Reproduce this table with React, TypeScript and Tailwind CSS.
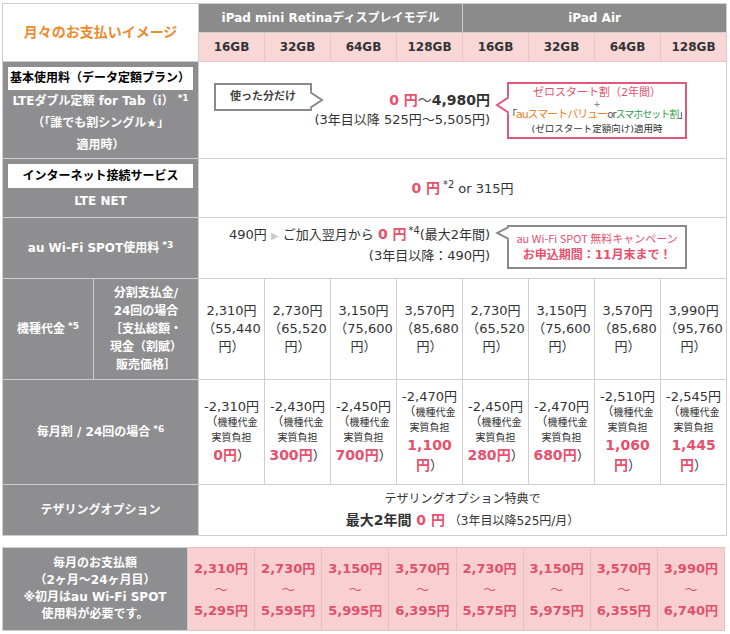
import React from "react";

const gray = "bg-[#8e8e90] text-white font-bold text-center border border-[#cfcfcf]";
const cell = "border border-[#cfcfcf] text-center";
const red = "text-[#e8506e]";

const caps = ["16GB", "32GB", "64GB", "128GB", "16GB", "32GB", "64GB", "128GB"];

const prices = [
  ["2,310", "55,440"],
  ["2,730", "65,520"],
  ["3,150", "75,600"],
  ["3,570", "85,680"],
  ["2,730", "65,520"],
  ["3,150", "75,600"],
  ["3,570", "85,680"],
  ["3,990", "95,760"],
];

// [discount, real cost, wraps?]
const discounts: [string, string, boolean][] = [
  ["-2,310", "0", false],
  ["-2,430", "300", false],
  ["-2,450", "700", false],
  ["-2,470", "1,100", true],
  ["-2,450", "280", false],
  ["-2,470", "680", false],
  ["-2,510", "1,060", true],
  ["-2,545", "1,445", true],
];

const totals = [
  ["2,310", "5,295"],
  ["2,730", "5,595"],
  ["3,150", "5,995"],
  ["3,570", "6,395"],
  ["2,730", "5,575"],
  ["3,150", "5,975"],
  ["3,570", "6,355"],
  ["3,990", "6,740"],
];

function Tail({ side, color, h, className }: { side: "left" | "right"; color: string; h: number; className: string }) {
  const w = 13;
  return (
    <svg width={w + 1} height={h} viewBox={`0 0 ${w + 1} ${h}`} className={`absolute ${className}`}>
      {side === "right" ? (
        <>
          <polygon points={`0,0 ${w},${h / 2} 0,${h}`} fill="white" />
          <polyline points={`0,1 ${w - 1},${h / 2} 0,${h - 1}`} fill="none" stroke={color} strokeWidth="2" />
        </>
      ) : (
        <>
          <polygon points={`${w + 1},0 1,${h / 2} ${w + 1},${h}`} fill="white" />
          <polyline points={`${w + 1},1 2,${h / 2} ${w + 1},${h - 1}`} fill="none" stroke={color} strokeWidth="2" />
        </>
      )}
    </svg>
  );
}

export default function App() {
  return (
    <div className="w-[730px] h-[634px] bg-white pl-[2px] pt-[3px] text-[13px] text-[#333] font-['DejaVu_Sans','Noto_Sans_CJK_JP',sans-serif]">
      <table className="table-fixed border-collapse w-[724px]">
        <colgroup>
          <col className="w-[91px]" />
          <col className="w-[105px]" />
          {caps.map((_, i) => (
            <col key={i} className="w-[66px]" />
          ))}
        </colgroup>
        <tbody>
          <tr>
            <td rowSpan={2} colSpan={2} className={`${cell} bg-white text-[14px] font-bold text-[#ef8a2c]`}>
              月々のお支払いイメージ
            </td>
            <td colSpan={4} className="h-[29px] bg-[#8b8b8b] text-white text-[12px] font-bold text-center border border-[#cfcfcf]">
              iPad mini Retinaディスプレイモデル
            </td>
            <td colSpan={4} className="bg-[#8b8b8b] text-white text-[12px] font-bold text-center border border-[#cfcfcf]">
              iPad Air
            </td>
          </tr>
          <tr>
            {caps.map((c, i) => (
              <td key={i} className="h-[29px] bg-[#fad7d7] border border-[#e3c6c6] text-center text-[12px] font-bold">
                {c}
              </td>
            ))}
          </tr>

          {/* 基本使用料 */}
          <tr>
            <td colSpan={2} className={`${gray} h-[97px] align-top px-[5px] pt-[5px] text-[12px]`}>
              <div className="bg-white text-black h-[23px] leading-[23px] text-left pl-[2px]">基本使用料（データ定額プラン）</div>
              <div className="leading-[22px]">
                LTEダブル定額 for Tab（i）
                <sup className="ml-[4px]">*1</sup>
                <br />
                （「誰でも割シングル★」
                <br />
                適用時）
              </div>
            </td>
            <td colSpan={8} className="border border-[#cfcfcf] bg-white">
              <div className="flex items-center h-[96px] pl-[15px]">
                <div className="relative self-start mt-[21px] w-[98px] h-[28px] border-2 border-[#8a8a8a] flex items-center justify-center text-[11px] font-bold text-[#444]">
                  使った分だけ
                  <Tail side="right" color="#8a8a8a" h={18} className="left-full top-[6px]" />
                </div>
                <div className="flex-1 text-right">
                  <div className="leading-[20px] font-bold text-[14px]">
                    <span className={red}>0 円</span>
                    <span className="font-normal text-[#555]">～</span>4,980円
                  </div>
                  <div className="leading-[20px]">(3年目以降 525円～5,505円)</div>
                </div>
                <div className="ml-[7px] mr-[39px] w-[190px] pl-[10px]">
                  <div className="relative h-[57px] border-2 border-[#e0587a] flex flex-col items-center justify-center">
                    <Tail side="left" color="#e0587a" h={18} className="right-full top-[12px]" />
                    <div className={`${red} text-[11px] leading-[14px]`}>ゼロスタート割（2年間）</div>
                    <div className="text-[9px] leading-[8px] text-[#777]">+</div>
                    <div className="text-[10px] leading-[14px] tracking-[-1px] whitespace-nowrap">
                      「<span className="text-[#ef7d22] text-[11px]">auスマートバリュー</span>
                      <span className="text-[#555]">or</span>
                      <span className="text-[#2e9a4a]">スマホセット割</span>」
                    </div>
                    <div className="text-[9.5px] leading-[13px] whitespace-nowrap">(ゼロスタート定額向け)適用時</div>
                  </div>
                </div>
              </div>
            </td>
          </tr>

          {/* インターネット接続サービス */}
          <tr>
            <td colSpan={2} className={`${gray} h-[59px] align-top px-[5px] pt-[5px] text-[12px]`}>
              <div className="bg-white text-black h-[24px] leading-[24px]">インターネット接続サービス</div>
              <div className="leading-[26px]">LTE NET</div>
            </td>
            <td colSpan={8} className={`${cell} bg-white`}>
              <span className={`${red} font-bold text-[14px]`}>0 円</span>
              <sup className="ml-[3px]">*2</sup> or 315円
            </td>
          </tr>

          {/* au Wi-Fi SPOT */}
          <tr>
            <td colSpan={2} className={`${gray} h-[61px] text-[12px]`}>
              au Wi-Fi SPOT使用料<sup className="ml-[3px]">*3</sup>
            </td>
            <td colSpan={8} className="border border-[#cfcfcf] bg-white">
              <div className="flex h-[60px]">
                <div className="flex-1 text-right pt-[6px]">
                  <div className="leading-[20px]">
                    490円 <span className="text-[#cccccc] text-[10px]">▶</span> ご加入翌月から{" "}
                    <span className={`${red} font-bold text-[14px]`}>0 円</span>
                    <sup className="ml-[2px]">*4</sup>(最大2年間)
                  </div>
                  <div className="leading-[20px]">(3年目以降：490円)</div>
                </div>
                <div className="ml-[7px] mr-[39px] w-[190px] pl-[10px] pt-[7px]">
                  <div className="relative h-[44px] border-2 border-[#8a8a8a] flex flex-col items-center justify-center">
                    <Tail side="left" color="#8a8a8a" h={14} className="right-full top-[-1px]" />
                    <div className={`${red} text-[11px] leading-[17px] font-['Noto_Sans_CJK_JP',sans-serif]`}>au Wi-Fi SPOT 無料キャンペーン</div>
                    <div className={`${red} text-[12px] leading-[17px] font-bold`}>お申込期間：11月末まで！</div>
                  </div>
                </div>
              </div>
            </td>
          </tr>

          {/* 機種代金 */}
          <tr>
            <td className={`${gray} h-[101px] text-[12px]`}>
              機種代金<sup className="ml-[3px]">*5</sup>
            </td>
            <td className={`${gray} text-[12px] leading-[18px]`}>
              分割支払金/
              <br />
              24回の場合
              <br />
              ［支払総額・
              <br />
              現金（割賦）
              <br />
              販売価格］
            </td>
            {prices.map(([p, t], i) => (
              <td key={i} className={`${cell} bg-white leading-[18px]`}>
                {p}円
                <br />（{t}
                <br />
                円）
              </td>
            ))}
          </tr>

          {/* 毎月割 */}
          <tr>
            <td colSpan={2} className={`${gray} h-[105px] text-[12px]`}>
              毎月割 / 24回の場合<sup className="ml-[3px]">*6</sup>
            </td>
            {discounts.map(([d, r, wrap], i) => (
              <td key={i} className={`${cell} bg-white`}>
                <div className="leading-[17px]">{d}円</div>
                <div className="text-[10px] leading-[15px]">
                  <span className="text-[12px]">（</span>機種代金
                </div>
                <div className="text-[10px] leading-[15px]">実質負担</div>
                {wrap ? (
                  <>
                    <div className={`${red} font-bold text-[14px] leading-[20px]`}>{r}</div>
                    <div className="leading-[20px]">
                      <span className={`${red} font-bold text-[14px]`}>円</span>）
                    </div>
                  </>
                ) : (
                  <div className="leading-[20px]">
                    <span className={`${red} font-bold text-[14px]`}>{r}円</span>）
                  </div>
                )}
              </td>
            ))}
          </tr>

          {/* テザリング */}
          <tr>
            <td colSpan={2} className={`${gray} h-[51px] text-[12px]`}>
              テザリングオプション
            </td>
            <td colSpan={8} className={`${cell} bg-white`}>
              <div className="text-[12px] leading-[21px]">テザリングオプション特典で</div>
              <div className="leading-[21px]">
                <span className="font-bold text-[14px]">最大2年間 </span>
                <span className={`${red} font-bold text-[14px]`}>0 円</span>
                <span className="text-[12px]"> （3年目以降525円/月）</span>
              </div>
            </td>
          </tr>
        </tbody>
      </table>

      <table className="table-fixed border-collapse w-[723px] mt-[11px]">
        <colgroup>
          <col className="w-[185px]" />
          {totals.map((_, i) => (
            <col key={i} />
          ))}
        </colgroup>
        <tbody>
          <tr>
            <td className="h-[83px] bg-[#8e8e90] text-white font-bold text-center text-[12px] leading-[17px] border border-[#cfcfcf]">
              毎月のお支払額
              <br />
              （2ヶ月～24ヶ月目）
              <br />
              ※初月はau Wi-Fi SPOT
              <br />
              使用料が必要です。
            </td>
            {totals.map(([a, b], i) => (
              <td key={i} className="bg-[#f9d0d1] border border-[#e6c0c0] text-center font-bold text-[13px] leading-[21px] text-[#e0506a]">
                {a}円
                <br />
                <span className="font-normal">～</span>
                <br />
                {b}円
              </td>
            ))}
          </tr>
        </tbody>
      </table>
    </div>
  );
}
